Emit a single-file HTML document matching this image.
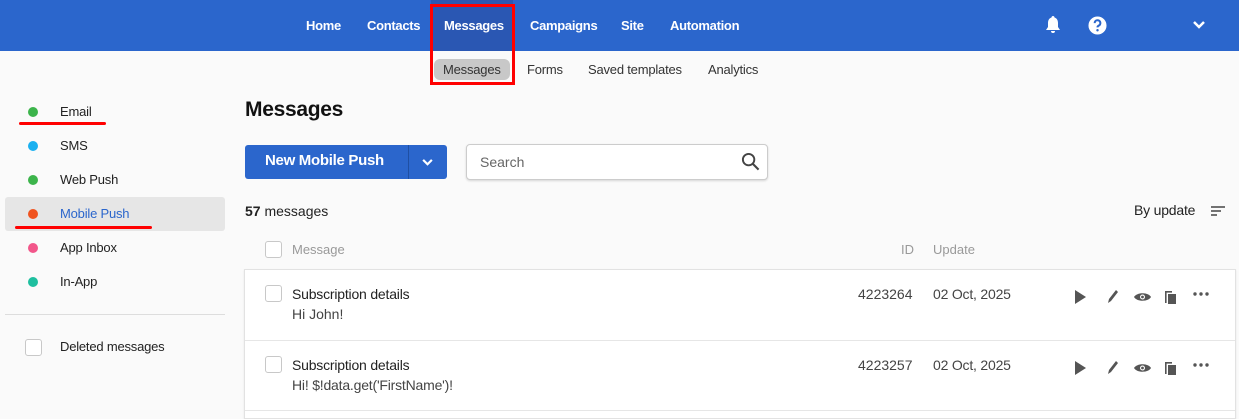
<!DOCTYPE html>
<html><head><style>
*{box-sizing:border-box;margin:0;padding:0}
body{width:1239px;height:414px;overflow:hidden;background:#fafafa;font-family:"Liberation Sans",sans-serif;position:relative;color:#222}
.hdr{position:absolute;left:0;top:0;width:1239px;height:51px;background:#2b66cc}
.nav{position:absolute;top:18px;color:#fff;font-size:13px;font-weight:bold;letter-spacing:-0.3px}
.act{position:absolute;left:431px;top:0;width:82px;height:51px;background:#2a57b3}
.red{position:absolute;border:3px solid #f00}
.sub{position:absolute;top:62px;font-size:13px;color:#333;letter-spacing:-0.2px}
.abs{position:absolute}
.dot{position:absolute;width:10px;height:10px;border-radius:50%;left:28px}
.side{position:absolute;left:60px;font-size:13px;color:#222;letter-spacing:-0.2px}
.cb{position:absolute;width:17px;height:17px;border:1px solid #c8c8c8;border-radius:3px;background:#fff}
</style></head><body>
<div class="hdr"></div>
<div class="act"></div>
<div class="nav" style="left:306px">Home</div>
<div class="nav" style="left:367px">Contacts</div>
<div class="nav" style="left:444px">Messages</div>
<div class="nav" style="left:530px">Campaigns</div>
<div class="nav" style="left:621px">Site</div>
<div class="nav" style="left:670px">Automation</div>
<svg class="abs" style="left:1044px;top:15px" width="18" height="20" viewBox="0 0 18 20"><path d="M9 1c-1 0-1.5.8-1.5 1.5C5 3.3 4 5.5 4 8v4l-2 3h14l-2-3V8c0-2.5-1-4.7-3.5-5.5C10.5 1.8 10 1 9 1z M7 16a2 2 0 0 0 4 0z" fill="#fff"/></svg>
<svg class="abs" style="left:1088px;top:16px" width="19" height="19" viewBox="0 0 20 20"><circle cx="10" cy="10" r="9.5" fill="#fff"/><path d="M7 7.5a3 3 0 1 1 4 2.8c-.8.4-1 .8-1 1.7" stroke="#2b66cc" stroke-width="2.2" fill="none"/><circle cx="10" cy="15" r="1.3" fill="#2b66cc"/></svg>
<svg class="abs" style="left:1193px;top:21px" width="12" height="8" viewBox="0 0 12 8"><path d="M1 1l5 5 5-5" stroke="#fff" stroke-width="2.5" fill="none"/></svg>
<div class="abs" style="left:434px;top:59px;width:76px;height:21px;background:#c8c8c8;border-radius:6px"></div>
<div class="sub" style="left:443px">Messages</div>
<div class="sub" style="left:527px">Forms</div>
<div class="sub" style="left:588px">Saved templates</div>
<div class="sub" style="left:708px">Analytics</div>
<div class="red" style="left:430px;top:4px;width:85px;height:81px"></div>

<div class="dot" style="top:107px;background:#3cb44b"></div><div class="side" style="top:104px">Email</div>
<div class="abs" style="left:19px;top:122px;width:87px;height:3px;background:#f00;border-radius:2px"></div>
<div class="dot" style="top:141px;background:#1ab0f0"></div><div class="side" style="top:138px">SMS</div>
<div class="dot" style="top:175px;background:#3cb44b"></div><div class="side" style="top:172px">Web Push</div>
<div class="abs" style="left:5px;top:197px;width:220px;height:34px;background:#e6e6e6;border-radius:3px"></div>
<div class="dot" style="top:209px;background:#f0531f"></div><div class="side" style="top:206px;color:#2b66cc">Mobile Push</div>
<div class="abs" style="left:15px;top:226px;width:137px;height:3px;background:#f00;border-radius:2px"></div>
<div class="dot" style="top:243px;background:#f2568a"></div><div class="side" style="top:240px">App Inbox</div>
<div class="dot" style="top:277px;background:#1ebf9f"></div><div class="side" style="top:274px">In-App</div>
<div class="abs" style="left:5px;top:314px;width:220px;height:1px;background:#ddd"></div>
<div class="cb" style="left:25px;top:339px"></div><div class="side" style="top:339px">Deleted messages</div>

<div class="abs" style="left:245px;top:98px;font-size:21px;font-weight:bold;color:#111;letter-spacing:-0.3px">Messages</div>
<div class="abs" style="left:245px;top:145px;width:202px;height:34px;background:#2b66cc;border-radius:3px"></div>
<div class="abs" style="left:408px;top:145px;width:1px;height:34px;background:#1f4fa3"></div>
<div class="abs" style="left:265px;top:152px;color:#fff;font-size:15px;font-weight:bold;letter-spacing:-0.3px">New Mobile Push</div>
<svg class="abs" style="left:422px;top:159px" width="11" height="7" viewBox="0 0 12 8"><path d="M1 1l5 5 5-5" stroke="#fff" stroke-width="2.5" fill="none"/></svg>
<div class="abs" style="left:466px;top:144px;width:302px;height:36px;background:#fff;border:1px solid #ccc;border-radius:4px;box-shadow:0 1px 2px rgba(0,0,0,.15)"></div>
<div class="abs" style="left:480px;top:154px;font-size:14px;color:#666">Search</div>
<svg class="abs" style="left:741px;top:152px" width="19" height="19" viewBox="0 0 20 20"><circle cx="8" cy="8" r="6" stroke="#444" stroke-width="2" fill="none"/><path d="M12.5 12.5l6 6" stroke="#444" stroke-width="2.2"/></svg>
<div class="abs" style="left:245px;top:203px;font-size:14px"><b>57</b> messages</div>
<div class="abs" style="left:1134px;top:202px;font-size:14px;letter-spacing:-0.2px">By update</div>
<svg class="abs" style="left:1211px;top:205px" width="14" height="12" viewBox="0 0 14 12"><path d="M0 2h14M0 6h10M0 10h6" stroke="#444" stroke-width="1.6"/></svg>
<div class="cb" style="left:265px;top:241px"></div>
<div class="abs" style="left:292px;top:242px;font-size:13px;color:#999">Message</div>
<div class="abs" style="left:901px;top:242px;font-size:13px;color:#999">ID</div>
<div class="abs" style="left:933px;top:242px;font-size:13px;color:#999">Update</div>
<div class="abs" style="left:244px;top:269px;width:992px;height:150px;background:#fff;border:1px solid #e2e2e2;box-shadow:0 1px 2px rgba(0,0,0,.08)"></div>
<div class="abs" style="left:245px;top:340px;width:990px;height:1px;background:#e6e6e6"></div>
<div class="abs" style="left:245px;top:410px;width:990px;height:1px;background:#e6e6e6"></div>

<div class="cb" style="left:265px;top:285px"></div>
<div class="abs" style="left:292px;top:286px;font-size:14px;letter-spacing:-0.2px">Subscription details</div>
<div class="abs" style="left:292px;top:306px;font-size:14px;color:#444">Hi John!</div>
<div class="abs" style="left:858px;top:286px;font-size:14px;color:#444">4223264</div>
<div class="abs" style="left:933px;top:286px;font-size:14px;color:#444;letter-spacing:-0.2px">02 Oct, 2025</div>
<div class="cb" style="left:265px;top:356px"></div>
<div class="abs" style="left:292px;top:357px;font-size:14px;letter-spacing:-0.2px">Subscription details</div>
<div class="abs" style="left:292px;top:377px;font-size:14px;color:#444;letter-spacing:-0.2px">Hi! $!data.get('FirstName')!</div>
<div class="abs" style="left:858px;top:357px;font-size:14px;color:#444">4223257</div>
<div class="abs" style="left:933px;top:357px;font-size:14px;color:#444;letter-spacing:-0.2px">02 Oct, 2025</div>

<svg class="abs" style="left:1072px;top:288px" width="145" height="90" viewBox="0 0 145 90">
<g id="r" fill="#555">
<path d="M3 2l11 7-11 7z"/>
<path d="M36 15l1-4 7-9 2 2-7 9z"/>
<path d="M62 9c3-5 14-5 17 0-3 5-14 5-17 0z"/><circle cx="70.5" cy="9" r="2.5" fill="#fff"/><circle cx="70.5" cy="9" r="1.4"/>
<path d="M93 3h7v1.6h-5.4V15H93z"/><rect x="96" y="6" width="8" height="10"/>
<circle cx="123" cy="6" r="1.7"/><circle cx="129" cy="6" r="1.7"/><circle cx="135" cy="6" r="1.7"/>
</g>
<use href="#r" y="71"/>
</svg>
</body></html>
